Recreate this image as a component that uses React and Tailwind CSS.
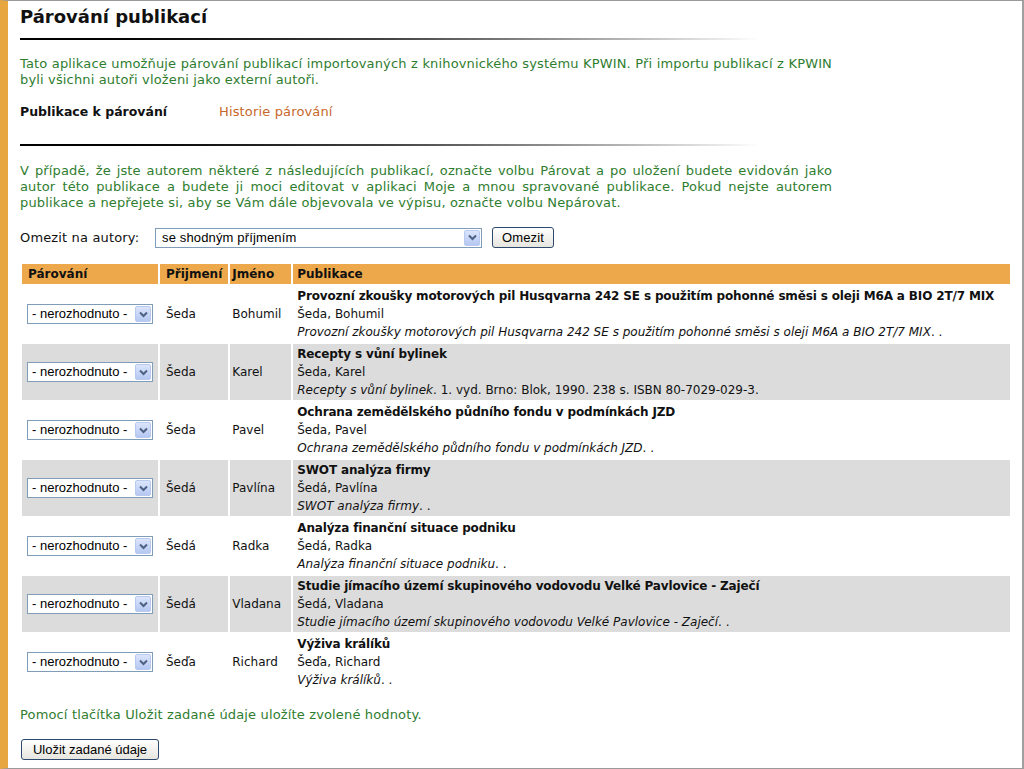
import React from "react";

const rows = [
  {
    last: "Šeda",
    first: "Bohumil",
    title: "Provozní zkoušky motorových pil Husqvarna 242 SE s použitím pohonné směsi s oleji M6A a BIO 2T/7 MIX",
    rest: ". .",
  },
  { last: "Šeda", first: "Karel", title: "Recepty s vůní bylinek", rest: ". 1. vyd. Brno: Blok, 1990. 238 s. ISBN 80-7029-029-3." },
  { last: "Šeda", first: "Pavel", title: "Ochrana zemědělského půdního fondu v podmínkách JZD", rest: ". ." },
  { last: "Šedá", first: "Pavlína", title: "SWOT analýza firmy", rest: ". ." },
  { last: "Šedá", first: "Radka", title: "Analýza finanční situace podniku", rest: ". ." },
  {
    last: "Šedá",
    first: "Vladana",
    title: "Studie jímacího území skupinového vodovodu Velké Pavlovice - Zaječí",
    rest: ". .",
  },
  { last: "Šeďa", first: "Richard", title: "Výživa králíků", rest: ". ." },
];

const ArrowBox = () => (
  <span className="flex h-[16px] w-[16px] items-center justify-center rounded-[2px] border border-[#b9c9ef] bg-linear-to-b from-[#dbe5fb] to-[#b6c8f2]">
    <svg width="9" height="7" viewBox="0 0 9 7">
      <path d="M1 1.5 L4.5 5 L8 1.5" fill="none" stroke="#4d6185" strokeWidth="2" />
    </svg>
  </span>
);

const FakeSelect = ({ label, className }) => (
  <div
    className={`flex h-[20px] items-center justify-between border border-[#7f9db9] bg-white pl-[4px] pr-[1px] text-[13px] text-black ${className}`}
    style={{ fontFamily: '"Liberation Sans", Arial, sans-serif' }}
  >
    <span>{label}</span>
    <ArrowBox />
  </div>
);

const XpButton = ({ children, className }) => (
  <button
    type="button"
    className={`h-[21px] rounded-[3px] border border-[#2d4a6e] bg-linear-to-b from-white to-[#e6e5df] px-[9px] text-[13px] leading-none text-black ${className}`}
    style={{ fontFamily: '"Liberation Sans", Arial, sans-serif' }}
  >
    {children}
  </button>
);

const Rule = () => <div className="h-[2px] w-[740px] bg-linear-to-r from-black via-[#444] to-white" />;

export default function App() {
  return (
    <div
      className="box-border h-[769px] w-full border-l-[8px] border-l-[#e8a640] border-t border-r-[2px] border-b border-t-[#9a9a9a] border-r-[#a0a0a0] border-b-[#9a9a9a] bg-white pl-[12px] pr-[6px] pt-[6px]"
      style={{ fontFamily: '"DejaVu Sans", Verdana, sans-serif' }}
    >
      <h1 className="text-[18px] font-bold leading-[20px] text-[#111]">Párování publikací</h1>
      <div className="mt-[11px]">
        <Rule />
      </div>

      <p className="mt-[16px] w-[812px] text-justify text-[13px] leading-[16px] tracking-[0.15px] text-[#2f7d2f]">
        Tato aplikace umožňuje párování publikací importovaných z knihovnického systému KPWIN. Při importu publikací z KPWIN
        byli všichni autoři vloženi jako externí autoři.
      </p>

      <div className="mt-[16px] flex text-[12.5px] leading-[16px]">
        <span className="w-[199px] font-bold text-[#111]">Publikace k párování</span>
        <span className="text-[13px] tracking-[0.15px] text-[#c8672a]">Historie párování</span>
      </div>

      <div className="mt-[24px]">
        <Rule />
      </div>

      <p className="mt-[17px] w-[812px] text-justify text-[13px] leading-[16px] tracking-[0.15px] text-[#2f7d2f]">
        V případě, že jste autorem některé z následujících publikací, označte volbu Párovat a po uložení budete evidován jako
        autor této publikace a budete ji moci editovat v aplikaci Moje a mnou spravované publikace. Pokud nejste autorem
        publikace a nepřejete si, aby se Vám dále objevovala ve výpisu, označte volbu Nepárovat.
      </p>

      <div className="mt-[16px] flex items-center text-[13px] tracking-[0.15px] text-[#111]">
        <span className="w-[135px]">Omezit na autory:</span>
        <FakeSelect label="se shodným příjmením" className="w-[327px] pl-[6px]" />
        <XpButton className="ml-[10px] w-[62px]">Omezit</XpButton>
      </div>

      <table className="mt-[14px] w-[992px] border-separate border-spacing-[2px] text-[12px] leading-[18px] text-[#111]">
        <thead>
          <tr className="bg-[#eca84a] text-left font-bold">
            <th className="h-[20px] w-[136px] px-[6px] py-0 text-left">Párování</th>
            <th className="w-[66px] px-[6px] py-0 text-left">Přijmení</th>
            <th className="w-[61px] px-[2px] py-0 text-left">Jméno</th>
            <th className="px-[4px] py-0 text-left">Publikace</th>
          </tr>
        </thead>
        <tbody>
          {rows.map((r, i) => (
            <tr key={i} className={i % 2 === 1 ? "bg-[#dcdcdc]" : "bg-white"}>
              <td className="h-[56px] px-[5px] py-0 align-middle">
                <FakeSelect label="- nerozhodnuto -" className="w-[126px]" />
              </td>
              <td className="px-[6px] py-0 align-middle">{r.last}</td>
              <td className="px-[2px] py-0 align-middle">{r.first}</td>
              <td className="px-[4px] py-[1px] align-top">
                <div className="whitespace-nowrap font-bold tracking-[-0.15px]">{r.title}</div>
                <div>
                  {r.last}, {r.first}
                </div>
                <div className="whitespace-nowrap">
                  <i>{r.title}</i>
                  {r.rest}
                </div>
              </td>
            </tr>
          ))}
        </tbody>
      </table>

      <p className="mt-[15px] text-[13px] leading-[16px] tracking-[0.15px] text-[#2f7d2f]">
        Pomocí tlačítka Uložit zadané údaje uložíte zvolené hodnoty.
      </p>
      <XpButton className="ml-[1px] mt-[16px] w-[138px]">Uložit zadané údaje</XpButton>
    </div>
  );
}
